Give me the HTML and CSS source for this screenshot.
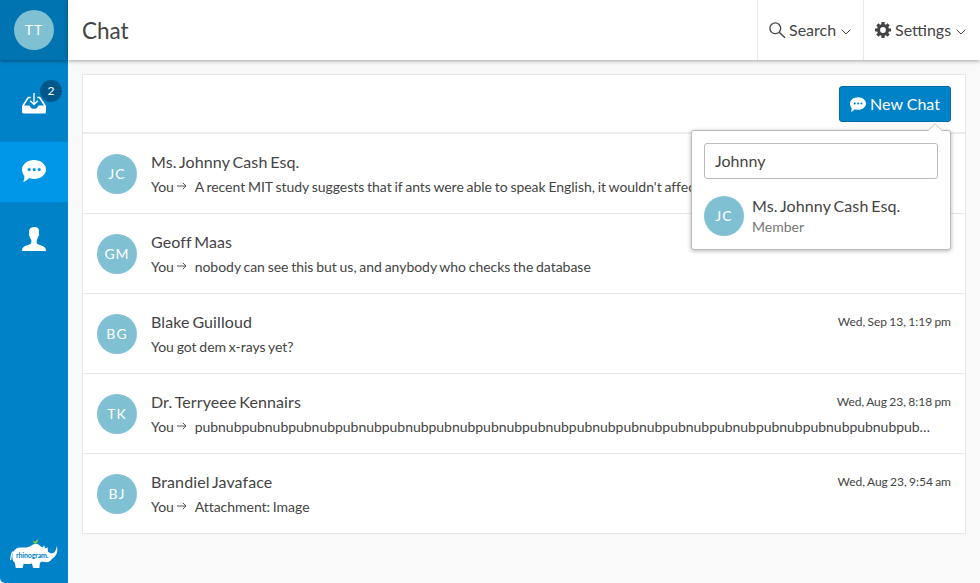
FILE: index.html
```html
<!DOCTYPE html>
<html lang="en">
<head>
<meta charset="utf-8">
<title>Chat</title>
<link rel="stylesheet" href="styles.css">
</head>
<body>
<svg class="defs" width="0" height="0">
  <symbol id="bubble" viewBox="0 0 24 22">
    <path fill="currentColor" fill-rule="evenodd" d="M12 0C18.600 0 24 4.200 24 9.500S18.600 19 12 19c-1.800 0-3.400-.3-5-.9C5.200 20.200 3.200 21.600 1 22c1-1.300 1.500-3.400 1.400-5.900C.9 14.300 0 12 0 9.500 0 4.200 5.400 0 12 0zM7.200 7.900a1.600 1.600 0 1 0 0 3.200a1.600 1.600 0 1 0 0-3.200zm5 0a1.600 1.600 0 1 0 0 3.200a1.600 1.600 0 1 0 0-3.200zm5 0a1.600 1.600 0 1 0 0 3.200a1.600 1.600 0 1 0 0-3.200z"/>
  </symbol>
  <symbol id="chevron" viewBox="0 0 10 6"><path d="M.7.700 5 5 9.300.7" fill="none" stroke="currentColor"/></symbol>
  <symbol id="arrow" viewBox="0 0 10 8"><path d="M0 4h9M5.800.800 9 4 5.800 7.200" fill="none" stroke="currentColor" stroke-width=".9"/></symbol>
</svg>
<div class="app">
  <aside class="sidebar">
    <div class="profile"><span class="avatar">TT</span></div>
    <nav class="nav">
      <a class="nav-item">
        <svg class="inbox" width="24" height="21" viewBox="0 0 24 21"><path fill="#fff" d="M0 12.500h6.800c.7 0 1 .3 1.300 1 .7 1.500 2 2.300 3.900 2.300s3.200-.8 3.900-2.300c.3-.7.6-1 1.300-1H24V19a1.500 1.500 0 0 1-1.500 1.500h-21A1.500 1.500 0 0 1 0 19z"/><path d="M.8 13 6.300 4.500h2.500M23.200 13 17.700 4.500h-2.500" fill="none" stroke="#fff" stroke-width="1.600"/><path d="M12 0v11M8.200 7.800 12 11.600l3.800-3.800" fill="none" stroke="#fff" stroke-width="1.400"/></svg>
        <span class="badge">2</span>
      </a>
      <a class="nav-item active"><svg width="24" height="22"><use href="#bubble"/></svg></a>
      <a class="nav-item">
        <svg class="person" width="24" height="24" viewBox="0 0 24 24"><path fill="#fff" d="M7.300 3C8 .8 9.700 0 12.500 0c3 0 4.700 1.400 4.500 4.200l-.2 2.300c.6.500.3 2.700-.6 3-.3 1.700-.8 2.600-1.500 3.500v2.500c0 1.400 1.300 1.800 3.300 2.500C21.500 19.200 24 20 24 24H0c0-4 2.500-4.800 6-6 2-.7 3.300-1.100 3.300-2.500V13C8.600 12.100 8.100 11.200 7.800 9.500c-.9-.3-1.200-2.500-.6-3L7 4.200z"/></svg>
      </a>
    </nav>
    <svg class="logo" width="50" height="34" viewBox="0 0 50 34">
      <path fill="#fff" d="M3.400 19C3 13 5.500 9 11 8.500c3-.3 5.500.3 8.500-.6C22.500 7 24.500 4.600 27.200 4.800c2.500.2 4 2.600 6.300 3.700L35 6.200l1.300 3.200 2.300-1.200.4 4.500c2.800 1.700 4.500 2 6 .8 1.700-1.400 2.200-3.700 2.900-6.400 1.400 5.300-.4 10.400-4.900 12.700-1.500 3.300-4.700 3.800-8.500 3-2-.4-3.500.1-3.700 2l-.4 4.200h-6.200l-1.300-4.600c-3 .8-5.500.8-8.300.3l-1 4.300H6.800L5.700 23.500C4.300 22.500 3.500 21 3.400 19z"/>
      <path d="M4.200 12.500C1.500 14.500 2.600 18 1.500 21" fill="none" stroke="#fff" stroke-width="1.200"/>
      <path fill="#8cc63f" d="M23.200 2c1.500.1 2.500.7 3.300.3L29.500-.2l-.8 2.700c-.5 1.500-1.500 1.900-2.200 2v1h-.8v-1.200c-1.200-.4-1.200-1.300-2.500-2.300z"/>
      <text class="logo-text" x="7" y="18.500" textLength="32.500">rhinogram.</text>
    </svg>
  </aside>
  <div class="content">
    <header class="topbar">
      <h1>Chat</h1>
      <a class="top-action search">
        <svg width="17" height="17" viewBox="0 0 17 17"><circle cx="6.300" cy="6.300" r="5.400" fill="none" stroke="currentColor" stroke-width="1.300"/><path d="m10.200 10.200 5.800 5.600" stroke="currentColor" stroke-width="1.500"/></svg>
        <span>Search</span><svg class="chev" width="10" height="6"><use href="#chevron"/></svg>
      </a>
      <a class="top-action settings">
        <svg width="16" height="16" viewBox="0 0 16 16"><g fill="none" stroke="currentColor"><circle cx="8" cy="8" r="4.500" stroke-width="3.200"/><path stroke-width="3.200" d="M8 0v3M8 13v3M0 8h3M13 8h3M2.350 2.350l2 2M11.650 11.650l2 2M2.350 13.650l2-2M11.650 4.350l2-2"/></g></svg>
        <span>Settings</span><svg class="chev" width="10" height="6"><use href="#chevron"/></svg>
      </a>
    </header>
    <main class="card">
      <div class="toolbar">
        <div class="new-chat-wrap">
          <button class="new-chat"><svg width="16" height="15"><use href="#bubble"/></svg><span>New Chat</span></button>
          <div class="popover">
            <svg class="caret" width="14" height="8" viewBox="0 0 14 8"><path d="M0 7.500 7 .7l7 6.800V8H0z" fill="#fff"/><path d="M.3 7.200 7 .7l6.700 6.500" fill="none" stroke="#bbb"/></svg>
            <input type="text" value="Johnny">
            <div class="result">
              <span class="avatar">JC</span>
              <div><div class="name">Ms. Johnny Cash Esq.</div><div class="role">Member</div></div>
            </div>
          </div>
        </div>
      </div>
      <div class="row">
        <span class="avatar">JC</span>
        <div class="body"><div class="line"><span class="name">Ms. Johnny Cash Esq.</span></div>
        <div class="message">You <svg class="arrow" width="10" height="8"><use href="#arrow"/></svg>A recent MIT study suggests that if ants were able to speak English, it wouldn't affect</div></div>
      </div>
      <div class="row">
        <span class="avatar">GM</span>
        <div class="body"><div class="line"><span class="name">Geoff Maas</span></div>
        <div class="message">You <svg class="arrow" width="10" height="8"><use href="#arrow"/></svg>nobody can see this but us, and anybody who checks the database</div></div>
      </div>
      <div class="row">
        <span class="avatar">BG</span>
        <div class="body"><div class="line"><span class="name">Blake Guilloud</span><time>Wed, Sep 13, 1:19 pm</time></div>
        <div class="message">You got dem x-rays yet?</div></div>
      </div>
      <div class="row">
        <span class="avatar">TK</span>
        <div class="body"><div class="line"><span class="name">Dr. Terryeee Kennairs</span><time>Wed, Aug 23, 8:18 pm</time></div>
        <div class="message">You <svg class="arrow" width="10" height="8"><use href="#arrow"/></svg>pubnubpubnubpubnubpubnubpubnubpubnubpubnubpubnubpubnubpubnubpubnubpubnubpubnubpubnubpubnubpub…</div></div>
      </div>
      <div class="row">
        <span class="avatar">BJ</span>
        <div class="body"><div class="line"><span class="name">Brandiel Javaface</span><time>Wed, Aug 23, 9:54 am</time></div>
        <div class="message">You <svg class="arrow" width="10" height="8"><use href="#arrow"/></svg>Attachment: Image</div></div>
      </div>
    </main>
  </div>
</div>
</body>
</html>
```
FILE: styles.css
```css
* { box-sizing: border-box; }
body { margin: 0; background: #fff; color: #444; font: 16px/20px Lato, sans-serif; overflow: hidden; }
svg { display: block; flex: none; }
.defs { position: absolute; }
.app { display: flex; height: 583px; }
.sidebar { width: 68px; flex: none; background: #0082c8; display: flex; flex-direction: column; align-items: center; border-bottom-left-radius: 5px; }
.profile { width: 68px; height: 60px; display: flex; align-items: center; justify-content: center; background: #0073b1; box-shadow: 0 1px 4px rgba(0,0,0,.4); }
.avatar { width: 40px; height: 40px; flex: none; border-radius: 50%; background: #80c0d3; color: #fff; display: flex; align-items: center; justify-content: center; font-size: 14px; letter-spacing: 1px; }
.nav { width: 100%; margin-top: 14px; display: flex; flex-direction: column; gap: 8px; }
.nav-item { height: 60px; display: flex; align-items: center; justify-content: center; color: #fff; position: relative; }
.nav-item.active { background: #0096e8; }
.nav-item.active svg { margin-top: -2px; }
.nav-item .inbox { margin-top: -2px; }
.nav-item .person { margin-top: -2px; }
.badge { position: absolute; left: 40px; top: 6px; width: 22px; height: 22px; border-radius: 50%; background: #00588a; font-size: 12px; line-height: 22px; text-align: center; }
.logo { margin-top: auto; margin-bottom: 10px; overflow: visible; }
.logo-text { font: bold 7px Lato, sans-serif; fill: #0082c8; }
.content { flex: 1; min-width: 0; background: #f9f9f9; }
.topbar { height: 60px; background: #fff; display: flex; align-items: center; box-shadow: 0 1px 4px rgba(0,0,0,.35); }
h1 { margin: 0 auto 0 14px; font-size: 22.500px; font-weight: 400; line-height: 30px; padding-top: 2px; }
.top-action { height: 60px; border-left: 1px solid #e8e8e8; display: flex; align-items: center; }
.search { width: 106px; padding-left: 11px; gap: 3px; }
.settings { width: 117px; padding-left: 11px; gap: 4px; }
.chev { margin: 3px 0 0 1px; }
.search .chev { margin-left: 2px; }
.card { margin: 14px 14px 0; border: 1px solid #e8e8e8; background: #fff; }
.toolbar { height: 59px; border-bottom: 2px solid #ebebeb; display: flex; justify-content: flex-end; padding: 11px 14px 0; }
.new-chat-wrap { position: relative; height: 36px; }
.new-chat { width: 112px; height: 36px; padding: 0; border: 1px solid #006ba6; border-radius: 3px; background: #0082c8; color: #fff; font: 16px/20px Lato, sans-serif; display: flex; align-items: center; justify-content: center; gap: 4px; }
.popover { position: absolute; z-index: 2; top: 44px; right: 0; width: 260px; height: 120px; padding: 12px; border: 1px solid #bbb; border-radius: 3px; background: #fff; box-shadow: 0 1px 4px rgba(0,0,0,.3); }
.caret { position: absolute; top: -8px; right: 8px; }
input { display: block; width: 234px; height: 36px; padding: 0 10px 2px; border: 1px solid #bbb; border-radius: 3px; color: #444; background: #fff; font: 16px Lato, sans-serif; outline: 0; }
.result { display: flex; gap: 8px; margin-top: 17px; }
.name { word-spacing: -1.300px; letter-spacing: .1px; }
.role { color: #777; font-size: 14px; margin-top: 1px; }
.row { height: 80px; border-bottom: 1px solid #e8e8e8; padding: 20px 14px 0; display: flex; gap: 14px; }
.row:last-child { height: 79px; border-bottom: 0; }
.body { flex: 1; min-width: 0; margin-top: -2px; }
.line { display: flex; justify-content: space-between; }
time { font-size: 12px; line-height: 20px; word-spacing: -.8px; }
.message { font-size: 14px; margin-top: 5px; white-space: nowrap; word-spacing: -.75px; letter-spacing: -.03px; }
.arrow { display: inline-block; margin: 0 8px 2px 0; }
```
